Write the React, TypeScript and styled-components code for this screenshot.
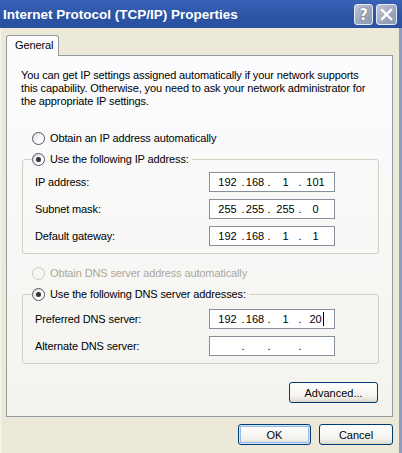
import React from 'react';
import styled, { createGlobalStyle } from 'styled-components';

const GlobalStyle = createGlobalStyle`
  html, body {
    margin: 0;
    padding: 0;
    background: #ece9d8;
  }
  body {
    font-family: 'Liberation Sans', Arial, sans-serif;
    font-size: 11px;
    letter-spacing: -0.12px;
    color: #000;
  }
  * {
    box-sizing: border-box;
  }
`;

// widths of the four number cells and the three dot cells of an address box
const octetWidths = [27, 20, 25, 27];
const dotWidths = [4, 8, 4];

const ipRows = [
  { label: 'IP address:', octets: ['192', '168', '1', '101'] },
  { label: 'Subnet mask:', octets: ['255', '255', '255', '0'] },
  { label: 'Default gateway:', octets: ['192', '168', '1', '1'] },
];

const dnsRows = [
  { label: 'Preferred DNS server:', octets: ['192', '168', '1', '20'], cursor: true },
  { label: 'Alternate DNS server:', octets: ['', '', '', ''] },
];

function IpField({ octets, cursor }: { octets: string[]; cursor?: boolean }) {
  return (
    <IpBox>
      {octets.map((o, i) => (
        <React.Fragment key={i}>
          {i > 0 && <Dot $w={dotWidths[i - 1]}>.</Dot>}
          <Octet $w={octetWidths[i]}>
            {o}
            {cursor && i === 3 ? <Caret /> : null}
          </Octet>
        </React.Fragment>
      ))}
    </IpBox>
  );
}

function Radio({
  label,
  checked,
  disabled,
}: {
  label: string;
  checked?: boolean;
  disabled?: boolean;
}) {
  return (
    <RadioRow $disabled={disabled}>
      <RadioCircle $disabled={disabled}>{checked ? <RadioDot /> : null}</RadioCircle>
      <span>{label}</span>
    </RadioRow>
  );
}

export default function App() {
  return (
    <>
      <GlobalStyle />
      <Window>
        <TitleBar>
          <Title>Internet Protocol (TCP/IP) Properties</Title>
          <TitleButtons>
            <CaptionButton $w={19}>?</CaptionButton>
            <CaptionButton $w={21}>
              <svg width="13" height="13" viewBox="0 0 13 13">
                <path
                  d="M2 2 L11 11 M11 2 L2 11"
                  stroke="#fff"
                  strokeWidth="2.4"
                  strokeLinecap="square"
                />
              </svg>
            </CaptionButton>
          </TitleButtons>
        </TitleBar>

        <Body>
          <TabStrip>
            <Tab>General</Tab>
          </TabStrip>
          <Panel>
            <Intro>
              You can get IP settings assigned automatically if your network supports
              <br />
              this capability. Otherwise, you need to ask your network administrator for
              <br />
              the appropriate IP settings.
            </Intro>

            <TopRadio>
              <Radio label="Obtain an IP address automatically" />
            </TopRadio>

            <GroupBox $top={5}>
              <Legend>
                <Radio label="Use the following IP address:" checked />
              </Legend>
              {ipRows.map(r => (
                <FieldRow key={r.label}>
                  <FieldLabel>{r.label}</FieldLabel>
                  <IpField octets={r.octets} />
                </FieldRow>
              ))}
            </GroupBox>

            <DnsRadio>
              <Radio label="Obtain DNS server address automatically" disabled />
            </DnsRadio>

            <GroupBox $top={7}>
              <Legend>
                <Radio label="Use the following DNS server addresses:" checked />
              </Legend>
              {dnsRows.map(r => (
                <FieldRow key={r.label}>
                  <FieldLabel>{r.label}</FieldLabel>
                  <IpField octets={r.octets} cursor={r.cursor} />
                </FieldRow>
              ))}
            </GroupBox>

            <AdvancedRow>
              <Button $w={89}>Advanced...</Button>
            </AdvancedRow>
          </Panel>

          <Footer>
            <Button $w={73} $default>
              OK
            </Button>
            <Button $w={74}>Cancel</Button>
          </Footer>
        </Body>
      </Window>
    </>
  );
}

const Window = styled.div`
  width: 402px;
  height: 453px;
  display: flex;
  flex-direction: column;
  background: #ece9d8;
  overflow: hidden;
`;

const TitleBar = styled.div`
  height: 28px;
  padding: 0 5px 0 3px;
  display: flex;
  align-items: center;
  justify-content: space-between;
  background: linear-gradient(#3963b6, #2c54a5 60%, #2a50a0);
`;

const Title = styled.div`
  font-family: 'Liberation Sans', Arial, sans-serif;
  font-size: 13.5px;
  font-weight: bold;
  letter-spacing: 0;
  color: #fff;
`;

const TitleButtons = styled.div`
  display: flex;
  gap: 3px;
  margin-top: 1px;
`;

const CaptionButton = styled.div<{ $w: number }>`
  width: ${p => p.$w}px;
  height: 21px;
  display: flex;
  align-items: center;
  justify-content: center;
  border: 1px solid #e6eaf2;
  border-radius: 3px;
  background: linear-gradient(135deg, #c2c8d6, #9aa4bc 60%, #8d98b2);
  font-family: 'DejaVu Sans', sans-serif;
  font-size: 15px;
  font-weight: bold;
  letter-spacing: 0;
  color: #fff;
  text-shadow: 0 0 1px #4a5670, 0 0 1px #4a5670;
`;

const Body = styled.div`
  flex: 1;
  padding: 7px 6px 0 5px;
  border-right: 3px solid #8d9cbf;
  border-left: 1px solid #f6f4ec;
`;

const TabStrip = styled.div`
  display: flex;
  height: 20px;
`;

const Tab = styled.div`
  position: relative;
  z-index: 1;
  width: 53px;
  height: 21px;
  padding-left: 8px;
  line-height: 19px;
  border: 1px solid #919b9c;
  border-bottom: none;
  border-radius: 3px 3px 0 0;
  background: #fcfcfe;
`;

const Panel = styled.div`
  height: 362px;
  padding: 13px 13px 0 14px;
  display: flex;
  flex-direction: column;
  border: 1px solid #919b9c;
  background: linear-gradient(#fcfcfe, #f4f3ee);
`;

const Intro = styled.p`
  margin: 0;
  line-height: 13px;
  white-space: nowrap;
`;

const TopRadio = styled.div`
  margin: 22px 0 0 11px;
`;

const DnsRadio = styled.div`
  margin: 11px 0 0 11px;
`;

const RadioRow = styled.div<{ $disabled?: boolean }>`
  height: 16px;
  display: flex;
  align-items: center;
  gap: 5px;
  color: ${p => (p.$disabled ? '#aca899' : '#000')};
  white-space: nowrap;
`;

const RadioCircle = styled.span<{ $disabled?: boolean }>`
  width: 13px;
  height: 13px;
  display: flex;
  align-items: center;
  justify-content: center;
  border: 1px solid ${p => (p.$disabled ? '#cac8bb' : '#4a5468')};
  border-radius: 50%;
  background: ${p =>
    p.$disabled ? 'transparent' : 'linear-gradient(135deg, #dcdcd6, #fff 70%)'};
`;

const RadioDot = styled.span`
  width: 5px;
  height: 5px;
  border-radius: 50%;
  background: #333;
`;

const GroupBox = styled.fieldset<{ $top: number }>`
  margin: 5px 0 0 1px;
  padding: ${p => p.$top}px 12px 7px 12px;
  display: flex;
  flex-direction: column;
  gap: 7px;
  border: 1px solid #d0d0bf;
  border-radius: 3px;
  min-width: 0;
`;

const Legend = styled.legend`
  margin-left: -3px;
  padding: 0 3px 0 0;
`;

const FieldRow = styled.div`
  height: 20px;
  display: flex;
  align-items: center;
`;

const FieldLabel = styled.span`
  width: 174px;
  flex: none;
`;

const IpBox = styled.div`
  width: 126px;
  height: 20px;
  padding-left: 4px;
  display: flex;
  align-items: center;
  border: 1px solid #868e9a;
  background: #fff;
  letter-spacing: 0;
`;

const Octet = styled.span<{ $w: number }>`
  position: relative;
  width: ${p => p.$w}px;
  flex: none;
  text-align: center;
`;

const Dot = styled.span<{ $w: number }>`
  width: ${p => p.$w}px;
  flex: none;
  text-align: center;
`;

const Caret = styled.span`
  position: absolute;
  top: -1px;
  margin-left: 1px;
  width: 1px;
  height: 14px;
  background: #000;
`;

const AdvancedRow = styled.div`
  margin-top: 18px;
  display: flex;
  justify-content: flex-end;
  padding-right: 1px;
`;

const Footer = styled.div`
  padding-top: 7px;
  display: flex;
  justify-content: flex-end;
  gap: 8px;
`;

const Button = styled.button<{ $w: number; $default?: boolean }>`
  width: ${p => p.$w}px;
  height: 21px;
  padding: 0;
  border: 1px solid #003c74;
  border-radius: 3px;
  background: linear-gradient(#ffffff, #f4f3ee 70%, #dcd8cc);
  font-family: 'Liberation Sans', Arial, sans-serif;
  font-size: 11px;
  color: #000;
  box-shadow: ${p =>
    p.$default ? 'inset 0 0 0 1px #cee7ff, inset 0 0 0 2px #98b8ea' : 'none'};
`;
